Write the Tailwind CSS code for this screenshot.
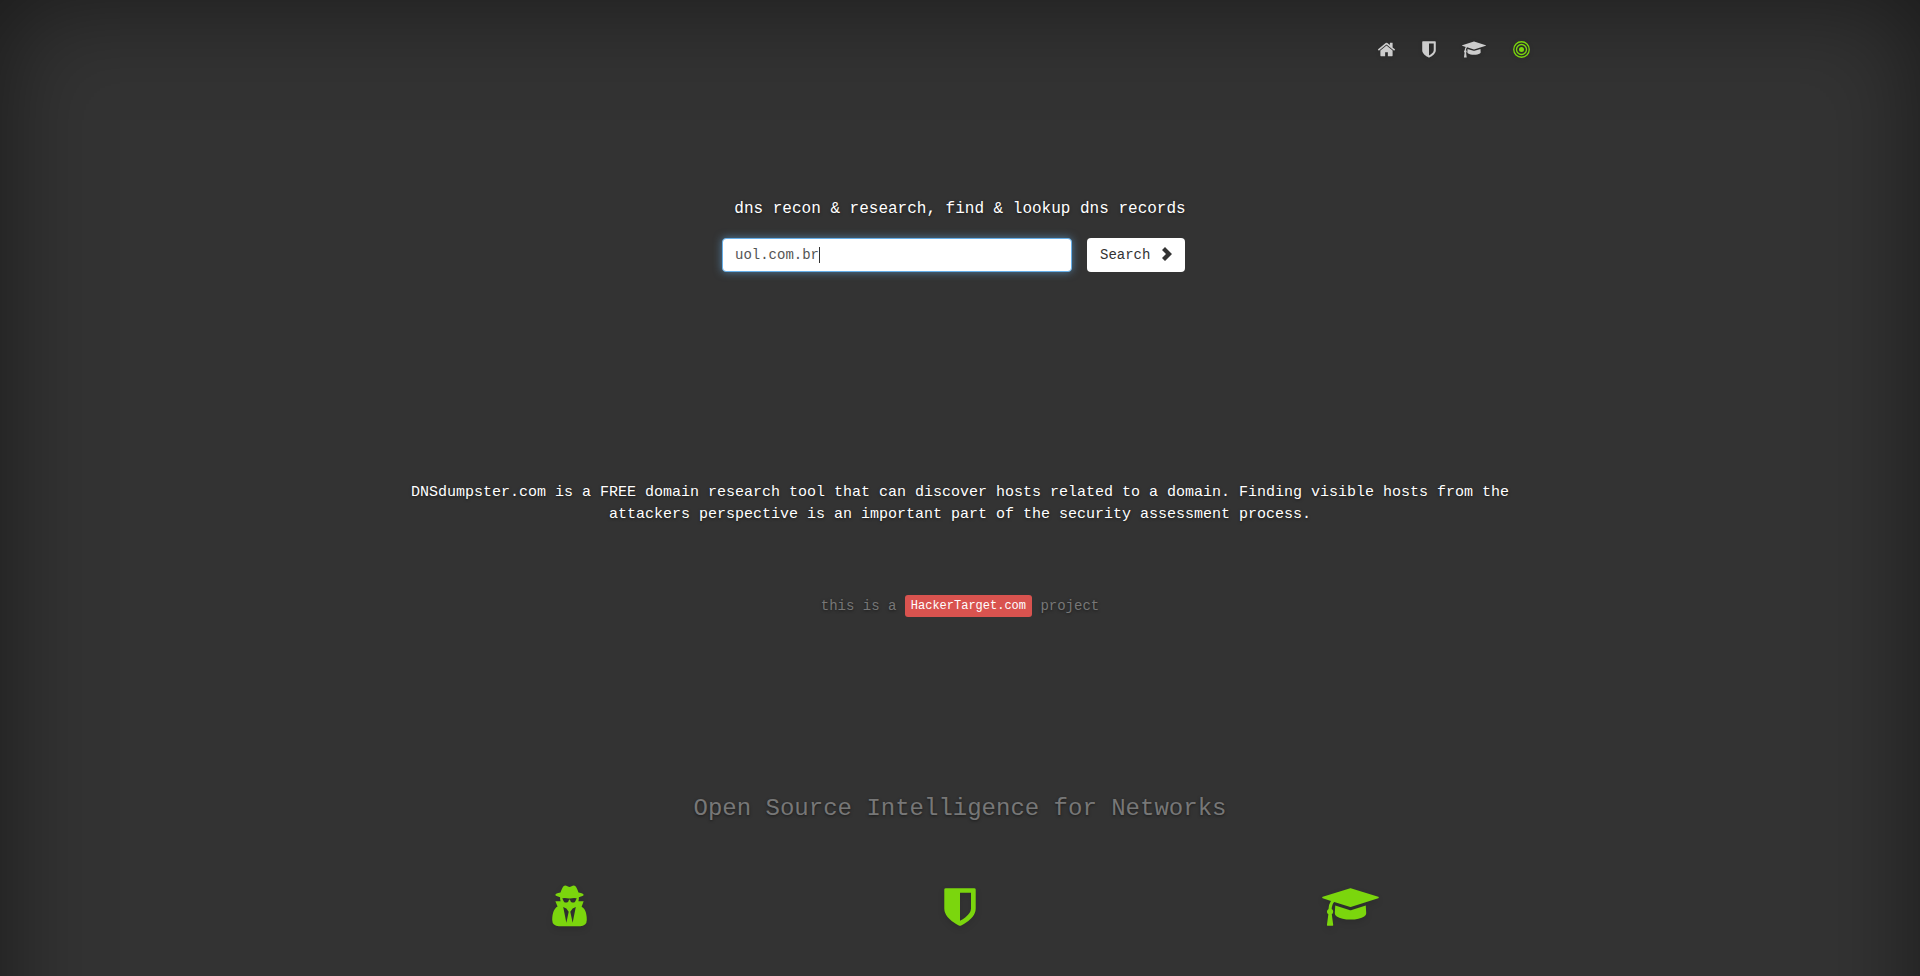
<!DOCTYPE html>
<html lang="en">
<head>
<meta charset="utf-8">
<meta name="viewport" content="width=device-width, initial-scale=1">
<title>DNSdumpster.com - dns recon and research, find and lookup dns records</title>
<script src="https://cdn.jsdelivr.net/npm/@tailwindcss/browser@4"></script>
</head>
<body class="bg-[#333] font-['Liberation_Mono',monospace] text-sm text-white [text-shadow:0_1px_3px_rgba(0,0,0,0.5)]">
<!-- Icon shapes shared by the navigation and the feature row -->
<svg class="hidden" aria-hidden="true">
  <symbol id="shield" viewBox="256 0 1280 1792"><path d="M1344 960v-640h-448v1137q119-63 213-137 235-184 235-360zm192-768v768q0 86-33.5 170.5t-83 150-118 127.5-126.5 103-121 77.5-89.5 49.5-42.5 20q-12 6-26 6t-26-6q-16-7-42.5-20t-89.5-49.5-121-77.5-126.5-103-118-127.5-83-150-33.5-170.5v-768q0-26 19-45t45-19h1152q26 0 45 19t19 45z"/></symbol>
  <symbol id="cap" viewBox="0 0 2304 1792"><path d="M1774 836l18 316q4 69-82 128t-235 93.500-323 34.500-323-34.500-235-93.500-82-128l18-316 574 181q22 7 48 7t48-7zm530-324q0 23-22 31l-1120 352q-4 1-10 1t-10-1l-652-206q-43 34-71 111.500t-34 178.500q63 36 63 109 0 69-58 107l58 433q2 14-8 25-9 11-24 11h-192q-15 0-24-11-10-11-8-25l58-433q-58-38-58-107 0-73 65-111 11-207 98-330l-333-104q-22-8-22-31t22-31l1120-352q4-1 10-1t10 1l1120 352q22 8 22 31z"/></symbol>
</svg>
<div class="relative min-h-screen overflow-hidden">
  <div class="pointer-events-none absolute inset-x-0 top-0 -bottom-52 shadow-[inset_0_0_100px_rgba(0,0,0,0.5)]"></div>
  <div class="relative mx-auto max-w-[1170px] px-[15px]">
    <header class="flex h-[98px] items-center justify-end">
      <nav class="flex items-center gap-[26px] fill-current text-[#ccc]">
        <a href="#home" aria-label="Home"><svg class="h-[19px] w-[19px] drop-shadow-sm" viewBox="0 0 1792 1792"><path d="M1472 992v480q0 26-19 45t-45 19h-384v-384h-256v384h-384q-26 0-45-19t-19-45v-480q0-1 .5-3t.5-3l575-474 575 474q1 2 1 6zm223-69l-62 74q-8 9-21 11h-3q-13 0-21-7l-692-577-692 577q-12 8-24 7-13-2-21-11l-62-74q-8-10-7-23.500t11-21.500l719-599q32-26 76-26t76 26l244 204v-195q0-14 9-23t23-9h192q14 0 23 9t9 23v408l219 182q10 8 11 21.500t-7 23.500z"/></svg></a>
        <a href="#defend" aria-label="Defend"><svg class="h-[19px] w-[14px] drop-shadow-sm"><use href="#shield"/></svg></a>
        <a href="#learn" aria-label="Learn" class="mr-px"><svg class="h-[19px] w-6 drop-shadow-sm"><use href="#cap"/></svg></a>
        <a href="#scanner" aria-label="Scanner" class="text-[#7bd60d]"><svg class="size-[17px] drop-shadow-sm" viewBox="0 0 34 34"><circle cx="17" cy="17" r="5"/><g fill="none" stroke="currentColor" stroke-width="2.600"><circle cx="17" cy="17" r="10"/><circle cx="17" cy="17" r="15.500"/></g></svg></a>
      </nav>
    </header>
    <main class="text-center">
      <label for="domain" class="mt-[99px] block text-base leading-6">dns recon &amp; research, find &amp; lookup dns records</label>
      <form class="mx-auto mt-[17px] flex max-w-[476px] gap-[15px]" onsubmit="return false">
        <div class="relative">
          <input id="domain" type="text" value="uol.com.br" class="block h-[34px] w-[350px] rounded-sm border border-[#66afe9] bg-white px-3 text-sm text-[#555] shadow-[0_0_8px_rgba(102,175,233,0.6)] outline-none [text-shadow:none]">
          <span class="pointer-events-none absolute top-[9px] left-[97px] h-4 w-px bg-[#333]"></span>
        </div>
        <button type="submit" class="flex h-[34px] w-[98px] items-center justify-between rounded-sm bg-white px-[13px] text-sm text-[#333] [text-shadow:none]">Search<svg class="mb-0.5 h-[14px] w-[10px] fill-current" viewBox="0 0 10 14"><path d="M3 0 10 7 3 14 0 11 4 7 0 3z"/></svg></button>
      </form>
      <p class="mt-[210px] text-[15px] leading-[22px]">DNSdumpster.com is a FREE domain research tool that can discover hosts related to a domain. Finding visible hosts from the attackers perspective is an important part of the security assessment process.</p>
      <p class="mt-[69px] flex items-center justify-center text-[#777]"><span class="whitespace-pre">this is a </span><a href="#hackertarget" class="rounded-[3px] bg-[#d9534f] px-1.5 text-xs leading-[22px] text-white [text-shadow:none]">HackerTarget.com</a><span class="whitespace-pre"> project</span></p>
      <h1 class="mt-44 text-2xl leading-8 text-[#777]">Open Source Intelligence for Networks</h1>
    </main>
  </div>
  <section class="relative mx-auto mt-[60px] grid max-w-[1172px] grid-cols-3 justify-items-center fill-current pb-8 text-[#7bd60d]" aria-label="Features">
    <svg class="h-11 w-[35px] drop-shadow-md" viewBox="128 0 1408 1792"><path d="M704 1536l96-448-96-128-128-64zm256 0l128-640-128 64-96 128zm160-992q-2-4-4-6-10-8-96-8-70 0-167 19-7 2-21 2t-21-2q-97-19-167-19-86 0-96 8-2 2-4 6 2 18 4 27 2 3 7.500 6.500t7.500 10.500q2 4 7.500 20.500t7 20.500 7.500 17 8.500 17 9 14 12 13.500 14 9.500 17.500 8 20.500 4 24.500 2q36 0 59-12.500t32.500-30 14.500-34.500 11.500-29.500 17.500-12.500h12q11 0 17.500 12.500t11.500 29.500 14.500 34.500 32.500 30 59 12.500q13 0 24.500-2t20.500-4 17.500-8 14-9.500 12-13.500 9-14 8.500-17 7.500-17 7-20.500 7.500-20.500q2-7 7.500-10.500t7.500-6.500q2-9 4-27zm416 879q0 121-73 190t-194 69h-874q-121 0-194-69t-73-190q0-61 4.500-118t19-125.500 37.500-123.500 63.500-103.500 93.500-74.500l-90-220h214q-22-64-22-128 0-12 2-32-194-40-194-96 0-57 210-99 17-62 51.500-134t70.500-114q32-37 76-37 30 0 84 31t84 31 84-31 84-31q44 0 76 37 36 42 70.500 114t51.500 134q210 42 210 99 0 56-194 96 7 81-20 160h214l-82 225q63 33 107.500 96.500t65.500 143.500 29 151.500 8 148.500z"/></svg>
    <svg class="h-11 w-8 drop-shadow-md"><use href="#shield"/></svg>
    <svg class="h-11 w-[57px] drop-shadow-md"><use href="#cap"/></svg>
  </section>
</div>
</body>
</html>
